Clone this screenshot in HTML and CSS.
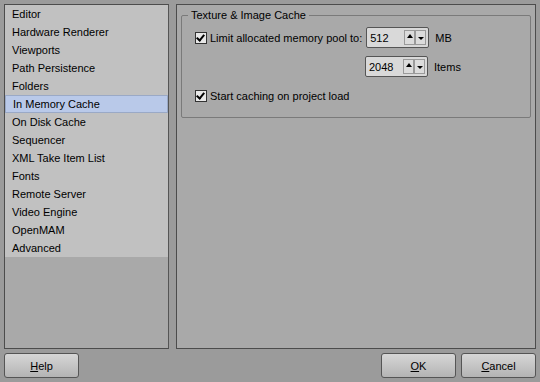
FILE: index.html
```html
<!DOCTYPE html>
<html>
<head>
  <meta charset="utf-8">
  <title>Preferences</title>
  <link rel="stylesheet" href="styles.css">
</head>
<body>

<div class="dialog">
  <div class="main">
    <div class="sidebar">
      <ul class="pages">
        <li>Editor</li>
        <li>Hardware Renderer</li>
        <li>Viewports</li>
        <li>Path Persistence</li>
        <li>Folders</li>
        <li class="selected">In Memory Cache</li>
        <li>On Disk Cache</li>
        <li>Sequencer</li>
        <li>XML Take Item List</li>
        <li>Fonts</li>
        <li>Remote Server</li>
        <li>Video Engine</li>
        <li>OpenMAM</li>
        <li>Advanced</li>
      </ul>
    </div>

    <div class="content">
      <fieldset class="group">
        <legend>Texture &amp; Image Cache</legend>

        <div class="row">
          <span class="check checked"></span>
          <span class="label">Limit allocated memory pool to:</span>
          <span class="spin"><span class="value">512</span><span class="arrows"><span class="up"></span><span class="down"></span></span></span>
          <span class="unit">MB</span>
        </div>

        <div class="row indent">
          <span class="spin"><span class="value">2048</span><span class="arrows"><span class="up"></span><span class="down"></span></span></span>
          <span class="unit">Items</span>
        </div>

        <div class="row">
          <span class="check checked"></span>
          <span class="label">Start caching on project load</span>
        </div>
      </fieldset>
    </div>
  </div>

  <div class="footer">
    <button class="btn"><u>H</u>elp</button>
    <div class="spacer"></div>
    <button class="btn"><u>O</u>K</button>
    <button class="btn"><u>C</u>ancel</button>
  </div>
</div>

</body>
</html>
```

FILE: styles.css
```css
html, body {
  margin: 0;
  padding: 0;
}
body {
  width: 540px;
  height: 382px;
  background-color: #9b9b9b;
  font-family: "Liberation Sans", Arial, sans-serif;
  font-size: 11px;
  color: #000;
  overflow: hidden;
}

.dialog {
  display: flex;
  flex-direction: column;
  padding: 4px;
  height: 374px;
}

.main {
  display: flex;
  gap: 7px;
  height: 345px;
}

/* left page list */
.sidebar {
  width: 163px;
  background-color: #a9a9a9;
  border: 1px solid #4c4c4c;
  border-right-color: #555;
}
.pages {
  list-style: none;
  margin: 0;
  padding: 0;
  background-color: #c1c1c1;
}
.pages li {
  height: 18px;
  line-height: 18px;
  padding-left: 7px;
  white-space: nowrap;
  box-sizing: border-box;
}
.pages li.selected {
  background-color: #b9c9e9;
  border: 1px solid #9aa9c6;
  line-height: 16px;
}

/* right page */
.content {
  flex: 1;
  background-color: #a9a9a9;
  border: 1px solid #4c4c4c;
  padding: 0 4px;
}
.group {
  margin: 4px 0 0 0;
  padding: 6px 0 11px 13px;
  border: 1px solid #7a7a7a;
  border-radius: 2px;
}
.group legend {
  padding: 0 3px;
  margin-left: -7px;
  font-size: 11px;
}

.row {
  display: flex;
  align-items: center;
  height: 21px;
  margin-bottom: 8px;
}
.row.indent {
  padding-left: 166px;
}
.row:last-child {
  margin-bottom: 0;
}

.check {
  width: 12px;
  height: 12px;
  border: 1px solid #333;
  background-color: #e8e8e8;
  position: relative;
  margin-right: 2px;
  box-sizing: border-box;
}
.check.checked::after {
  content: "";
  position: absolute;
  left: 2px;
  top: 0px;
  width: 3px;
  height: 6px;
  border: solid #000;
  border-width: 0 2px 2px 0;
  transform: rotate(40deg);
}
.label {
  margin-left: 1px;
}

.spin {
  display: flex;
  align-items: center;
  width: 61px;
  height: 19px;
  margin-left: 4px;
  border: 1px solid #555;
  border-radius: 2px;
  background-color: #d9d9d9;
}
.spin .value {
  flex: 1;
  padding-left: 3px;
}
.spin .arrows {
  display: flex;
  margin-right: 2px;
}
.spin .up, .spin .down {
  width: 9px;
  height: 13px;
  border: 1px solid #9a9a9a;
  background-color: #dcdcdc;
  position: relative;
}
.spin .up::after {
  content: "";
  position: absolute;
  left: 2px;
  top: 3px;
  border-left: 3px solid transparent;
  border-right: 3px solid transparent;
  border-bottom: 4px solid #000;
}
.spin .down::after {
  content: "";
  position: absolute;
  left: 2px;
  top: 6px;
  border-left: 3px solid transparent;
  border-right: 3px solid transparent;
  border-top: 3px solid #000;
}
.unit {
  margin-left: 6px;
}

/* bottom buttons */
.footer {
  display: flex;
  gap: 5px;
  margin-top: 4px;
}
.spacer {
  flex: 1;
}
.btn {
  width: 75px;
  height: 25px;
  font-family: "Liberation Sans", Arial, sans-serif;
  font-size: 11px;
  color: #000;
  border: 1px solid #555;
  border-radius: 3px;
  background: linear-gradient(#d6d6d6, #b4b4b4);
  padding: 0;
}
```
